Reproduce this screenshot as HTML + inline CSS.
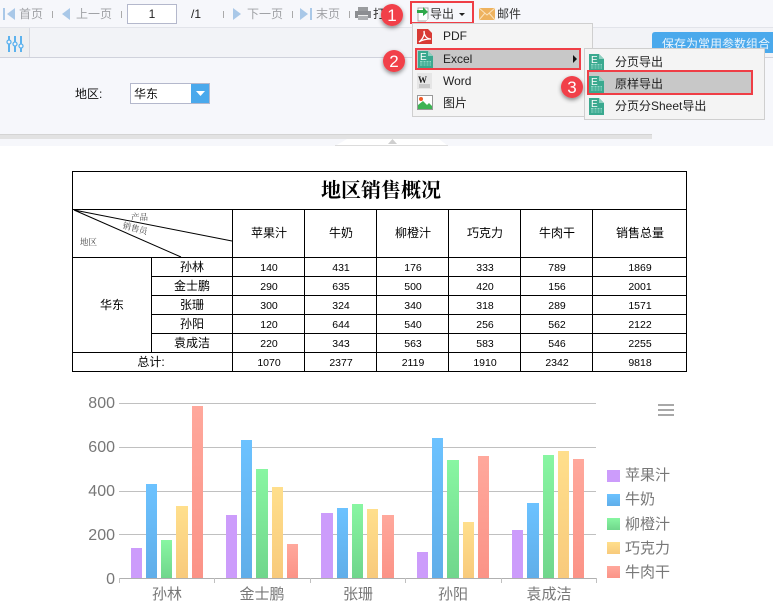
<!DOCTYPE html>
<html><head><meta charset="utf-8">
<style>
html,body{margin:0;padding:0;background:#fff;width:773px;height:616px;overflow:hidden}
svg{display:block}
text{font-family:"Liberation Sans","WenQuanYi Zen Hei","Noto Sans CJK SC",sans-serif}
.tb{font-size:12px;fill:#a0a2a6}
.t{font-size:12px;fill:#000;text-anchor:middle}
.n{font-size:10.500px;fill:#000;text-anchor:middle}
.m{font-size:12px;fill:#222}
.y{font-size:16px;fill:#777;text-anchor:end}
.x{font-size:15px;fill:#777;text-anchor:middle}
.l{font-size:15px;fill:#777}
.c{font-size:17px;fill:#fff;text-anchor:middle}
.s{font-size:8.500px;fill:#444;font-family:"Liberation Serif","Noto Serif CJK SC",serif}
</style></head><body>
<svg xmlns="http://www.w3.org/2000/svg" width="773" height="616" viewBox="0 0 773 616" shape-rendering="crispEdges">
<defs>
<linearGradient id="gb" x1="0" y1="0" x2="0" y2="1"><stop offset="0" stop-color="#6cc2ff"/><stop offset="1" stop-color="#60aee9"/></linearGradient>
<linearGradient id="gg" x1="0" y1="0" x2="0" y2="1"><stop offset="0" stop-color="#88f6a2"/><stop offset="1" stop-color="#70d68c"/></linearGradient>
<linearGradient id="gy" x1="0" y1="0" x2="0" y2="1"><stop offset="0" stop-color="#ffdf8c"/><stop offset="1" stop-color="#f8ca7c"/></linearGradient>
<linearGradient id="gr" x1="0" y1="0" x2="0" y2="1"><stop offset="0" stop-color="#ffa89c"/><stop offset="1" stop-color="#fb9387"/></linearGradient>
<filter id="sh" x="-40%" y="-40%" width="180%" height="180%"><feDropShadow dx="0" dy="2" stdDeviation="2" flood-color="#000" flood-opacity=".45"/></filter>
<g id="xl"><path d="M0 0H10L15 5V17H0Z" fill="#3aa98f" shape-rendering="auto"/><path d="M10 0L15 5H10Z" fill="#8fd0c0" shape-rendering="auto"/><rect x="2" y="10" width="11" height="5" fill="#8fd6c6"/><path d="M2 12h11M2 14h11M5 10v5M8 10v5M11 10v5" stroke="#3aa98f" stroke-width=".6"/><text x="2" y="9" font-size="10" fill="#fff" style="font-family:'Liberation Sans'">E</text></g>
</defs>

<!-- toolbar -->
<rect width="773" height="146" fill="#f6f7fb"/>
<rect y="27" width="773" height="1" fill="#e2e4ea"/>
<rect y="28" width="773" height="29" fill="#f2f3f7"/>
<rect y="28" width="30" height="30" fill="#eeeff1"/>
<rect x="29" y="28" width="1" height="30" fill="#d8dae2"/>
<rect y="57" width="773" height="1" fill="#d0d2dc"/>

<rect x="3" y="8" width="2" height="12" fill="#a9c8e8"/><path d="M7 14L15 8V20Z" fill="#a9c8e8" shape-rendering="auto"/>
<text x="19" y="18" class="tb">首页</text><rect x="52" y="11" width="1" height="7" fill="#aaa"/>
<path d="M62 14L70 8V20Z" fill="#a9c8e8" shape-rendering="auto"/>
<text x="76" y="18" class="tb">上一页</text><rect x="121" y="11" width="1" height="7" fill="#aaa"/>
<rect x="127.500" y="4.500" width="49" height="19" fill="#fff" stroke="#b4b8cc"/>
<text x="152" y="18" font-size="12" text-anchor="middle" fill="#222">1</text>
<text x="191" y="18" font-size="12" fill="#222">/1</text>
<rect x="223" y="11" width="1" height="7" fill="#aaa"/>
<path d="M241 14L233 8V20Z" fill="#a9c8e8" shape-rendering="auto"/>
<text x="247" y="18" class="tb">下一页</text><rect x="292" y="11" width="1" height="7" fill="#aaa"/>
<path d="M308 14L300 8V20Z" fill="#a9c8e8" shape-rendering="auto"/><rect x="310" y="8" width="2" height="12" fill="#a9c8e8"/>
<text x="316" y="18" class="tb">末页</text><rect x="349" y="11" width="1" height="7" fill="#aaa"/>
<rect x="358" y="7" width="10" height="5" fill="#9a9c9f"/><rect x="355" y="11" width="16" height="7" fill="#8c8e92"/><rect x="358" y="16" width="10" height="4" fill="#aeb0b3"/><rect x="358" y="15" width="10" height="1" fill="#f0f0f0"/>
<text x="373" y="18" font-size="12" fill="#333">打</text>

<!-- filter icon -->
<g fill="#5cb2ee"><rect x="8" y="36" width="2" height="16"/><rect x="14" y="36" width="2" height="16"/><rect x="20" y="36" width="2" height="16"/></g>
<g fill="#f2f3f7" stroke="#5cb2ee" stroke-width="1.300" shape-rendering="auto"><circle cx="9" cy="42" r="2"/><circle cx="15" cy="44" r="2"/><circle cx="21" cy="46" r="2"/></g>

<!-- form -->
<text x="75" y="98" font-size="12" fill="#111">地区:</text>
<rect x="130.500" y="83.500" width="79" height="20" fill="#fff" stroke="#b4b8cc"/>
<text x="134" y="98" font-size="12" fill="#111">华东</text>
<rect x="191" y="84" width="18" height="19" fill="#4aa9ec"/>
<path d="M196 91H205L200.500 96Z" fill="#fff" shape-rendering="auto"/>

<!-- scrollbar -->
<rect x="0" y="134" width="652" height="5" fill="#e2e2e2"/>
<rect x="0" y="134" width="652" height="1" fill="#d4d4d4"/>
<path d="M335 146L347 139H439L448 146Z" fill="#fff" shape-rendering="auto"/>
<rect x="335" y="145" width="113" height="1" fill="#dcdcdc"/>
<path d="M388 144L392.500 139L397 144Z" fill="#cfcfcf" shape-rendering="auto"/>
<rect y="146" width="773" height="470" fill="#fff"/>

<!-- blue button -->
<path d="M652 53V35Q652 32 655 32H773V53Z" fill="#4aa9ec" shape-rendering="auto"/>
<text x="662" y="48" font-size="12" fill="#e8f4fd">保存为常用参数组合</text>

<!-- export -->
<path d="M418 8H428V19L426 21H418Z" fill="#fff" stroke="#aaa" stroke-width=".7"/>
<path d="M417 10H423V7L428 12L423 16V13H417Z" fill="#2fa84a" shape-rendering="auto"/>
<text x="430" y="18" font-size="12" fill="#333">导出</text>
<path d="M459 13H465L462 16Z" fill="#222" shape-rendering="auto"/>
<rect x="479" y="8" width="16" height="12" fill="#eeb25e"/>
<path d="M479 8L487 15L495 8M479 20L485 13M495 20L489 13" fill="none" stroke="#fbe3bd" shape-rendering="auto"/>
<text x="497" y="18" font-size="12" fill="#333">邮件</text>
<rect x="411" y="2" width="62" height="21" fill="none" stroke="#ef3e46" stroke-width="2"/>

<!-- menu -->
<rect x="412.500" y="23.500" width="180" height="93" fill="#f4f4f4" stroke="#cfcfcf"/>
<path d="M417 29H428L432 33V44H417Z" fill="#d83a34" shape-rendering="auto"/>
<path d="M419 42C423 39 425 34 424 31C424 36 427 39 431 39C427 39 422 40 419 42Z" fill="none" stroke="#fff" stroke-width="1.300" shape-rendering="auto"/>
<text x="443" y="40" font-size="12.500" class="m">PDF</text>
<rect x="416" y="49" width="164" height="20" fill="#c8c8c8"/>
<use href="#xl" x="418" y="51"/>
<text x="443" y="63" class="m">Excel</text>
<path d="M573 55L577 59L573 63Z" fill="#111" shape-rendering="auto"/>
<rect x="416" y="49" width="164" height="20" fill="none" stroke="#ef3e46" stroke-width="2"/>
<rect x="417" y="73" width="15" height="16" fill="#e6e6e6"/>
<text x="418" y="83" font-size="9" font-weight="bold" fill="#222" style="font-family:'Liberation Serif'">W</text>
<path d="M419 85h11M419 87h11" stroke="#aaa"/>
<text x="443" y="85" class="m">Word</text>
<rect x="417.500" y="95.500" width="15" height="14" fill="#fff" stroke="#999"/>
<circle cx="421" cy="99" r="2" fill="#f05a28" shape-rendering="auto"/>
<path d="M418 109V105L423 101L427 105L429 103L432 106V109Z" fill="#3eb354" shape-rendering="auto"/>
<text x="443" y="107" class="m">图片</text>

<!-- submenu -->
<rect x="584.500" y="48.500" width="180" height="71" fill="#f4f4f4" stroke="#cfcfcf"/>
<use href="#xl" x="589" y="54"/>
<text x="615" y="66" class="m">分页导出</text>
<rect x="588" y="71" width="164" height="23" fill="#c8c8c8"/>
<use href="#xl" x="589" y="76"/>
<text x="615" y="88" class="m">原样导出</text>
<rect x="588" y="71" width="164" height="23" fill="none" stroke="#ef3e46" stroke-width="2"/>
<use href="#xl" x="589" y="98"/>
<text x="615" y="110" class="m">分页分Sheet导出</text>

<!-- badges -->
<g shape-rendering="auto">
<circle cx="392" cy="15" r="11" fill="#f1404a" filter="url(#sh)"/><text x="392" y="21" class="c">1</text>
<circle cx="394" cy="61" r="11" fill="#f1404a" filter="url(#sh)"/><text x="394" y="67" class="c">2</text>
<circle cx="572" cy="87" r="11" fill="#f1404a" filter="url(#sh)"/><text x="572" y="93" class="c">3</text>
</g>

<!-- table -->
<g stroke="#000" fill="none">
<rect x="72.500" y="171.500" width="614" height="200"/>
<path d="M72 209.500H687M72 257.500H687M151 276.500H687M151 295.500H687M151 314.500H687M151 333.500H687M72 352.500H687"/>
<path d="M232.500 209V372M304.500 209V372M376.500 209V372M448.500 209V372M520.500 209V372M592.500 209V372M151.500 257V352"/>
<path d="M74 210L232 241M74 210L181 257" shape-rendering="auto"/>
</g>
<text x="381" y="197" font-size="20" font-weight="bold" text-anchor="middle" fill="#000" style="font-family:'Liberation Serif','Noto Serif CJK SC',serif">地区销售概况</text>
<text x="131" y="220" class="s">产品</text>
<text x="122" y="228" class="s" transform="rotate(15 122 228)">销售员</text>
<text x="80" y="245" class="s">地区</text>
<g>
<text x="269" y="237" class="t">苹果汁</text><text x="341" y="237" class="t">牛奶</text><text x="413" y="237" class="t">柳橙汁</text><text x="485" y="237" class="t">巧克力</text><text x="557" y="237" class="t">牛肉干</text><text x="640" y="237" class="t">销售总量</text>
<text x="112" y="309" class="t">华东</text>
<text x="192" y="271" class="t">孙林</text><text x="192" y="290" class="t">金士鹏</text><text x="192" y="309" class="t">张珊</text><text x="192" y="328" class="t">孙阳</text><text x="192" y="347" class="t">袁成洁</text>
<text x="151" y="366" class="t">总计:</text>
</g>
<g>
<text x="269" y="271" class="n">140</text><text x="341" y="271" class="n">431</text><text x="413" y="271" class="n">176</text><text x="485" y="271" class="n">333</text><text x="557" y="271" class="n">789</text><text x="640" y="271" class="n">1869</text>
<text x="269" y="290" class="n">290</text><text x="341" y="290" class="n">635</text><text x="413" y="290" class="n">500</text><text x="485" y="290" class="n">420</text><text x="557" y="290" class="n">156</text><text x="640" y="290" class="n">2001</text>
<text x="269" y="309" class="n">300</text><text x="341" y="309" class="n">324</text><text x="413" y="309" class="n">340</text><text x="485" y="309" class="n">318</text><text x="557" y="309" class="n">289</text><text x="640" y="309" class="n">1571</text>
<text x="269" y="328" class="n">120</text><text x="341" y="328" class="n">644</text><text x="413" y="328" class="n">540</text><text x="485" y="328" class="n">256</text><text x="557" y="328" class="n">562</text><text x="640" y="328" class="n">2122</text>
<text x="269" y="347" class="n">220</text><text x="341" y="347" class="n">343</text><text x="413" y="347" class="n">563</text><text x="485" y="347" class="n">583</text><text x="557" y="347" class="n">546</text><text x="640" y="347" class="n">2255</text>
<text x="269" y="366" class="n">1070</text><text x="341" y="366" class="n">2377</text><text x="413" y="366" class="n">2119</text><text x="485" y="366" class="n">1910</text><text x="557" y="366" class="n">2342</text><text x="640" y="366" class="n">9818</text>
</g>

<!-- chart -->
<g fill="#c0c0c0">
<rect x="119" y="403" width="477" height="1"/><rect x="119" y="447" width="477" height="1"/><rect x="119" y="491" width="477" height="1"/><rect x="119" y="534" width="477" height="1"/>
<rect x="119" y="578" width="477" height="1" fill="#b0b0b0"/>
<rect x="119" y="578" width="1" height="5"/><rect x="214" y="578" width="1" height="5"/><rect x="310" y="578" width="1" height="5"/><rect x="405" y="578" width="1" height="5"/><rect x="501" y="578" width="1" height="5"/><rect x="596" y="578" width="1" height="5"/>
</g>
<text x="115" y="408" class="y">800</text><text x="115" y="452" class="y">600</text><text x="115" y="496" class="y">400</text><text x="115" y="540" class="y">200</text><text x="115" y="584" class="y">0</text>
<g>
<rect x="131" y="548" width="11" height="30" fill="#cc9cfb"/>
<rect x="146" y="484" width="11" height="94" fill="url(#gb)"/>
<rect x="161" y="540" width="11" height="38" fill="url(#gg)"/>
<rect x="176" y="506" width="12" height="72" fill="url(#gy)"/>
<rect x="192" y="406" width="11" height="172" fill="url(#gr)"/>
<rect x="226" y="515" width="11" height="63" fill="#cc9cfb"/>
<rect x="241" y="440" width="11" height="138" fill="url(#gb)"/>
<rect x="256" y="469" width="12" height="109" fill="url(#gg)"/>
<rect x="272" y="487" width="11" height="91" fill="url(#gy)"/>
<rect x="287" y="544" width="11" height="34" fill="url(#gr)"/>
<rect x="321" y="513" width="12" height="65" fill="#cc9cfb"/>
<rect x="337" y="508" width="11" height="70" fill="url(#gb)"/>
<rect x="352" y="504" width="11" height="74" fill="url(#gg)"/>
<rect x="367" y="509" width="11" height="69" fill="url(#gy)"/>
<rect x="382" y="515" width="12" height="63" fill="url(#gr)"/>
<rect x="417" y="552" width="11" height="26" fill="#cc9cfb"/>
<rect x="432" y="438" width="11" height="140" fill="url(#gb)"/>
<rect x="447" y="460" width="12" height="118" fill="url(#gg)"/>
<rect x="463" y="522" width="11" height="56" fill="url(#gy)"/>
<rect x="478" y="456" width="11" height="122" fill="url(#gr)"/>
<rect x="512" y="530" width="11" height="48" fill="#cc9cfb"/>
<rect x="527" y="503" width="12" height="75" fill="url(#gb)"/>
<rect x="543" y="455" width="11" height="123" fill="url(#gg)"/>
<rect x="558" y="451" width="11" height="127" fill="url(#gy)"/>
<rect x="573" y="459" width="11" height="119" fill="url(#gr)"/>
</g>
<text x="167" y="599" class="x">孙林</text><text x="262" y="599" class="x">金士鹏</text><text x="358" y="599" class="x">张珊</text><text x="453" y="599" class="x">孙阳</text><text x="549" y="599" class="x">袁成洁</text>
<g fill="#a8a8a8"><rect x="658" y="404" width="16" height="2"/><rect x="658" y="409" width="16" height="2"/><rect x="658" y="414" width="16" height="2"/></g>
<rect x="607" y="470" width="13" height="12" fill="#cc9cfb"/><text x="625" y="480" class="l">苹果汁</text>
<rect x="607" y="494" width="13" height="12" fill="url(#gb)"/><text x="625" y="504" class="l">牛奶</text>
<rect x="607" y="518" width="13" height="12" fill="url(#gg)"/><text x="625" y="529" class="l">柳橙汁</text>
<rect x="607" y="542" width="13" height="12" fill="url(#gy)"/><text x="625" y="553" class="l">巧克力</text>
<rect x="607" y="566" width="13" height="12" fill="url(#gr)"/><text x="625" y="577" class="l">牛肉干</text>
</svg>
</body></html>
